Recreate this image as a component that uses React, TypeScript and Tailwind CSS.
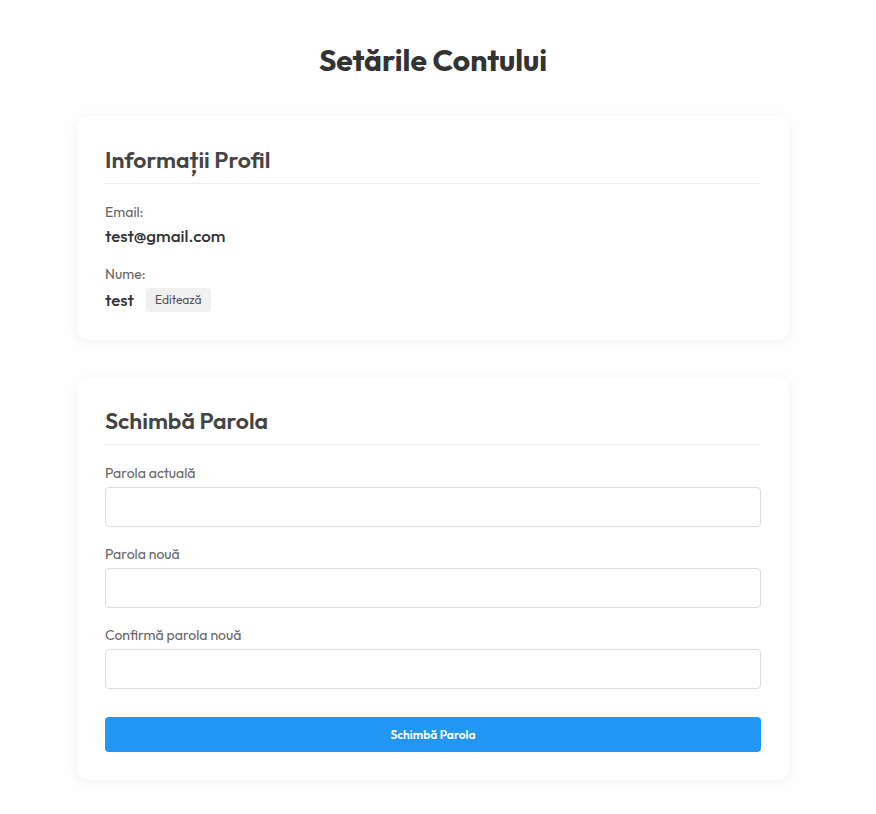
import React from "react";

const passwordFields = [
  { id: "current", label: "Parola actuală", auto: "current-password" },
  { id: "new", label: "Parola nouă", auto: "new-password" },
  { id: "confirm", label: "Confirmă parola nouă", auto: "new-password" },
];

function Card({ title, children }: { title: string; children: React.ReactNode }) {
  return (
    <section className="rounded-xl bg-white p-7 shadow-[0_2px_12px_rgba(0,0,0,0.05)]">
      <h2 className="mb-5 border-b border-[#eeeeee] pt-0.5 pb-[9px] text-[23px] leading-7 font-semibold text-[#444444]">
        {title}
      </h2>
      {children}
    </section>
  );
}

export default function App() {
  return (
    <div className="min-h-screen bg-[#fefefe] pr-2.5 font-['Outfit','Lato',sans-serif] text-[#333333]">
      <main className="mx-auto flex max-w-[800px] flex-col gap-[37px] px-11 pt-10 pb-8">
        <h1 className="-mb-px text-center text-[30px] leading-10 font-bold">Setările Contului</h1>
        <Card title="Informații Profil">
          <dl>
            <dt className="text-sm leading-4 text-[#666666]">Email:</dt>
            <dd className="mt-1 text-[17px] leading-6 font-medium">test@gmail.com</dd>
            <dt className="mt-[18px] text-sm leading-4 text-[#666666]">Nume:</dt>
            <dd className="mt-1.5 flex items-center gap-3 text-[17px] leading-6 font-medium">
              <span>test</span>
              <button type="button" className="rounded bg-[#f0f0f0] px-[9px] text-xs leading-6 font-normal text-[#555555]">
                Editează
              </button>
            </dd>
          </dl>
        </Card>
        <Card title="Schimbă Parola">
          <form onSubmit={(e) => e.preventDefault()}>
            {passwordFields.map((f) => (
              <div key={f.id} className="mb-[19px]">
                <label htmlFor={f.id} className="mb-1.5 block text-sm leading-4 text-[#666666]">
                  {f.label}
                </label>
                <input
                  id={f.id}
                  type="password"
                  autoComplete={f.auto}
                  className="block h-10 w-full rounded border border-[#dddddd] bg-white px-3 text-base"
                />
              </div>
            ))}
            <button type="submit" className="mt-7 block w-full rounded bg-[#2196f3] text-xs leading-[35px] font-semibold text-white">
              Schimbă Parola
            </button>
          </form>
        </Card>
      </main>
    </div>
  );
}
